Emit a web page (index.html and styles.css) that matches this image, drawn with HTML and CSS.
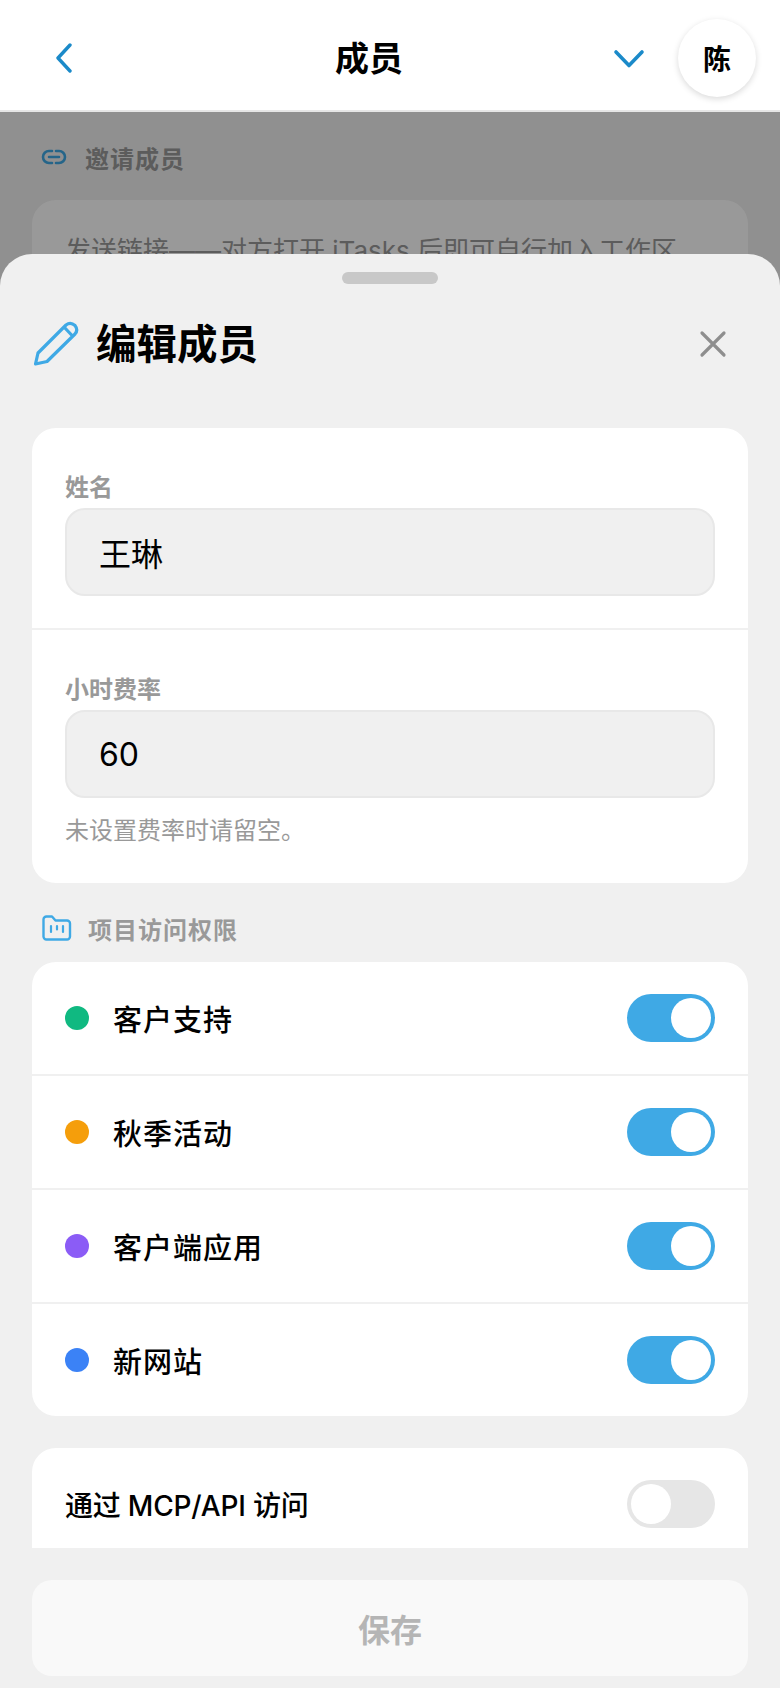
FILE: index.html
```html
<!DOCTYPE html>
<html lang="zh-CN">
<head>
  <meta charset="UTF-8">
  <title>成员</title>
  <link rel="stylesheet" href="styles.css">
</head>
<body>

<header class="topbar">
  <div class="back">
    <svg width="20" height="30" viewBox="0 0 20 30"><path d="M16 2 L4 15 L16 28" fill="none" stroke="#1b8ac9" stroke-width="3.4" stroke-linecap="round" stroke-linejoin="round"/></svg>
  </div>
  <div class="page-title">成员</div>
  <div class="top-right">
    <svg class="caret" width="32" height="20" viewBox="0 0 32 20"><path d="M3 3 L16 16.5 L29 3" fill="none" stroke="#1b8ac9" stroke-width="3.6" stroke-linecap="round" stroke-linejoin="round"/></svg>
    <div class="avatar">陈</div>
  </div>
</header>

<main class="behind">
  <div class="section-label behind-label">
    <svg width="26" height="16" viewBox="0 0 26 16"><path d="M11 2 H8 a6 6 0 0 0 0 12 H11 M15 2 H18 a6 6 0 0 1 0 12 H15 M8 8 H18" fill="none" stroke="#3fa9e5" stroke-width="2.6" stroke-linecap="round"/></svg>
    <span>邀请成员</span>
  </div>
  <div class="behind-card">发送链接——对方打开 iTasks 后即可自行加入工作区</div>
</main>

<div class="dim"></div>

<section class="sheet">
  <div class="handle"></div>
  <div class="sheet-head">
    <svg width="48" height="48" viewBox="0 0 48 48"><path d="M3.5 44 L6 33 L34 5 Q38.5 1.5 43 5.5 Q46.5 10 43 14 L15 41.5 Z M32.5 7.5 L40.5 16" fill="none" stroke="#3fa9e5" stroke-width="3.2" stroke-linejoin="round" stroke-linecap="round"/></svg>
    <h1>编辑成员</h1>
    <svg class="close" width="28" height="28" viewBox="0 0 28 28"><path d="M3 3 L25 25 M25 3 L3 25" fill="none" stroke="#8e8e8e" stroke-width="3.2" stroke-linecap="round"/></svg>
  </div>

  <div class="sheet-scroll">
    <div class="card">
      <div class="field">
        <div class="field-label">姓名</div>
        <div class="field-input">王琳</div>
      </div>
      <div class="field">
        <div class="field-label">小时费率</div>
        <div class="field-input">60</div>
        <div class="hint">未设置费率时请留空。</div>
      </div>
    </div>

    <div class="section-label">
      <svg width="30" height="26" viewBox="0 0 30 26"><path d="M1.5 4.5 a3 3 0 0 1 3 -3 H10 L13.5 5.5 H25 a3 3 0 0 1 3 3 V21.5 a3 3 0 0 1 -3 3 H4.5 a3 3 0 0 1 -3 -3 Z" fill="none" stroke="#3fa9e5" stroke-width="2.4" stroke-linejoin="round"/><path d="M9 11 V17 M15 11 V14.5 M21 11 V17" fill="none" stroke="#3fa9e5" stroke-width="2.2" stroke-linecap="round"/></svg>
      <span>项目访问权限</span>
    </div>

    <div class="card">
      <div class="row">
        <span class="dot green"></span>
        <span class="row-name">客户支持</span>
        <span class="toggle on"><span class="knob"></span></span>
      </div>
      <div class="row">
        <span class="dot orange"></span>
        <span class="row-name">秋季活动</span>
        <span class="toggle on"><span class="knob"></span></span>
      </div>
      <div class="row">
        <span class="dot purple"></span>
        <span class="row-name">客户端应用</span>
        <span class="toggle on"><span class="knob"></span></span>
      </div>
      <div class="row">
        <span class="dot blue"></span>
        <span class="row-name">新网站</span>
        <span class="toggle on"><span class="knob"></span></span>
      </div>
    </div>

    <div class="card api-card">
      <div class="row">
        <span class="api-name">通过 MCP/API 访问</span>
        <span class="toggle"><span class="knob"></span></span>
      </div>
    </div>
  </div>

  <div class="sheet-foot">
    <button class="save" type="button">保存</button>
  </div>
</section>

</body>
</html>
```

FILE: styles.css
```css
* {
  box-sizing: border-box;
}

html, body {
  margin: 0;
  padding: 0;
  height: 100%;
}

body {
  position: relative;
  height: 1688px;
  overflow: hidden;
  background-color: #f0f0f0;
  font-family: Inter, "Noto Sans CJK SC", sans-serif;
  color: #000;
}

/* top bar */
.topbar {
  position: relative;
  z-index: 3;
  height: 112px;
  padding: 5px 24px 0;
  display: flex;
  align-items: center;
  justify-content: space-between;
  background-color: #fff;
  border-bottom: 2px solid #e6e6e6;
}

.back {
  width: 101px;
  padding-left: 30px;
  display: flex;
}

.page-title {
  margin-bottom: 3px;
  font-size: 34px;
  font-weight: 700;
}

.top-right {
  display: flex;
  align-items: center;
  gap: 33px;
}

.caret {
  margin-top: 2px;
}

.avatar {
  width: 78px;
  height: 78px;
  border-radius: 50%;
  background-color: #fff;
  box-shadow: 0 2px 6px rgba(0,0,0,0.15);
  display: flex;
  align-items: center;
  justify-content: center;
  font-size: 28px;
  font-weight: 700;
}

/* page under the sheet */
.behind {
  padding: 29px 32px 0;
}

.behind-card {
  margin-top: 27px;
  height: 140px;
  padding: 30px 33px;
  border-radius: 24px;
  background-color: #fff;
  font-size: 26px;
  color: #999;
  white-space: nowrap;
}

.dim {
  position: absolute;
  z-index: 1;
  top: 112px;
  left: 0;
  right: 0;
  bottom: 0;
  background-color: rgba(0,0,0,0.4);
}

/* bottom sheet */
.sheet {
  position: absolute;
  z-index: 2;
  top: 254px;
  left: 0;
  right: 0;
  bottom: 0;
  display: flex;
  flex-direction: column;
  background-color: #f0f0f0;
  border-radius: 32px 32px 0 0;
  overflow: hidden;
}

.handle {
  flex: none;
  width: 96px;
  height: 12px;
  margin: 18px auto 0;
  border-radius: 6px;
  background-color: #c8c8c8;
}

.sheet-head {
  flex: none;
  height: 144px;
  padding: 0 53px 25px 32px;
  display: flex;
  align-items: center;
  gap: 16px;
}

.sheet-head h1 {
  flex: 1;
  margin: 0 0 4px;
  font-size: 40.5px;
  font-weight: 700;
}

.sheet-scroll {
  flex: 1;
  min-height: 0;
  padding: 0 32px;
  overflow: hidden;
}

.card {
  background-color: #fff;
  border-radius: 24px;
  overflow: hidden;
}

.field {
  padding: 44px 33px 32px;
}

.field + .field {
  border-top: 2px solid #f0f0f0;
}

.field-label {
  height: 32px;
  line-height: 32px;
  font-size: 24px;
  font-weight: 600;
  color: #999;
}

.field-input {
  height: 88px;
  margin-top: 4px;
  padding: 0 32px;
  display: flex;
  align-items: center;
  background-color: #f0f0f0;
  border: 2px solid #e8e8e8;
  border-radius: 20px;
  font-size: 32px;
}

.hint {
  margin: 17px 0 4px;
  line-height: 32px;
  font-size: 24px;
  color: #999;
}

.section-label {
  height: 79px;
  padding: 11px 0 0 10px;
  display: flex;
  align-items: center;
  gap: 16px;
  font-size: 24px;
  font-weight: 600;
  letter-spacing: 1px;
  color: #999;
}

.behind-label {
  height: 32px;
  padding: 0 0 0 9px;
  gap: 18px;
}

.row {
  height: 114px;
  padding: 0 33px;
  display: flex;
  align-items: center;
  border-bottom: 2px solid #f0f0f0;
}

.row:last-child {
  height: 112px;
  border-bottom: none;
}

.dot {
  flex: none;
  width: 24px;
  height: 24px;
  margin-right: 24px;
  border-radius: 50%;
}

.green { background-color: #10b981; }
.orange { background-color: #f59e0b; }
.purple { background-color: #8b5cf6; }
.blue { background-color: #3b82f6; }

.row-name {
  flex: 1;
  font-size: 29px;
  font-weight: 500;
  letter-spacing: 1px;
}

.api-card {
  margin-top: 32px;
  min-height: 140px;
}

.api-name {
  flex: 1;
  font-size: 28px;
  font-weight: 500;
  letter-spacing: -0.2px;
}

.toggle {
  flex: none;
  width: 88px;
  height: 48px;
  padding: 4px;
  display: flex;
  border-radius: 24px;
  background-color: #e6e6e6;
}

.toggle.on {
  justify-content: flex-end;
  background-color: #3fa9e5;
}

.knob {
  width: 40px;
  height: 40px;
  border-radius: 50%;
  background-color: #fff;
}

.sheet-foot {
  flex: none;
  padding: 32px 32px 12px;
}

.save {
  display: block;
  width: 100%;
  height: 96px;
  border: none;
  border-radius: 20px;
  background-color: #f9f9f9;
  font-family: inherit;
  font-size: 32px;
  font-weight: 700;
  color: #b5b5b5;
}
```
